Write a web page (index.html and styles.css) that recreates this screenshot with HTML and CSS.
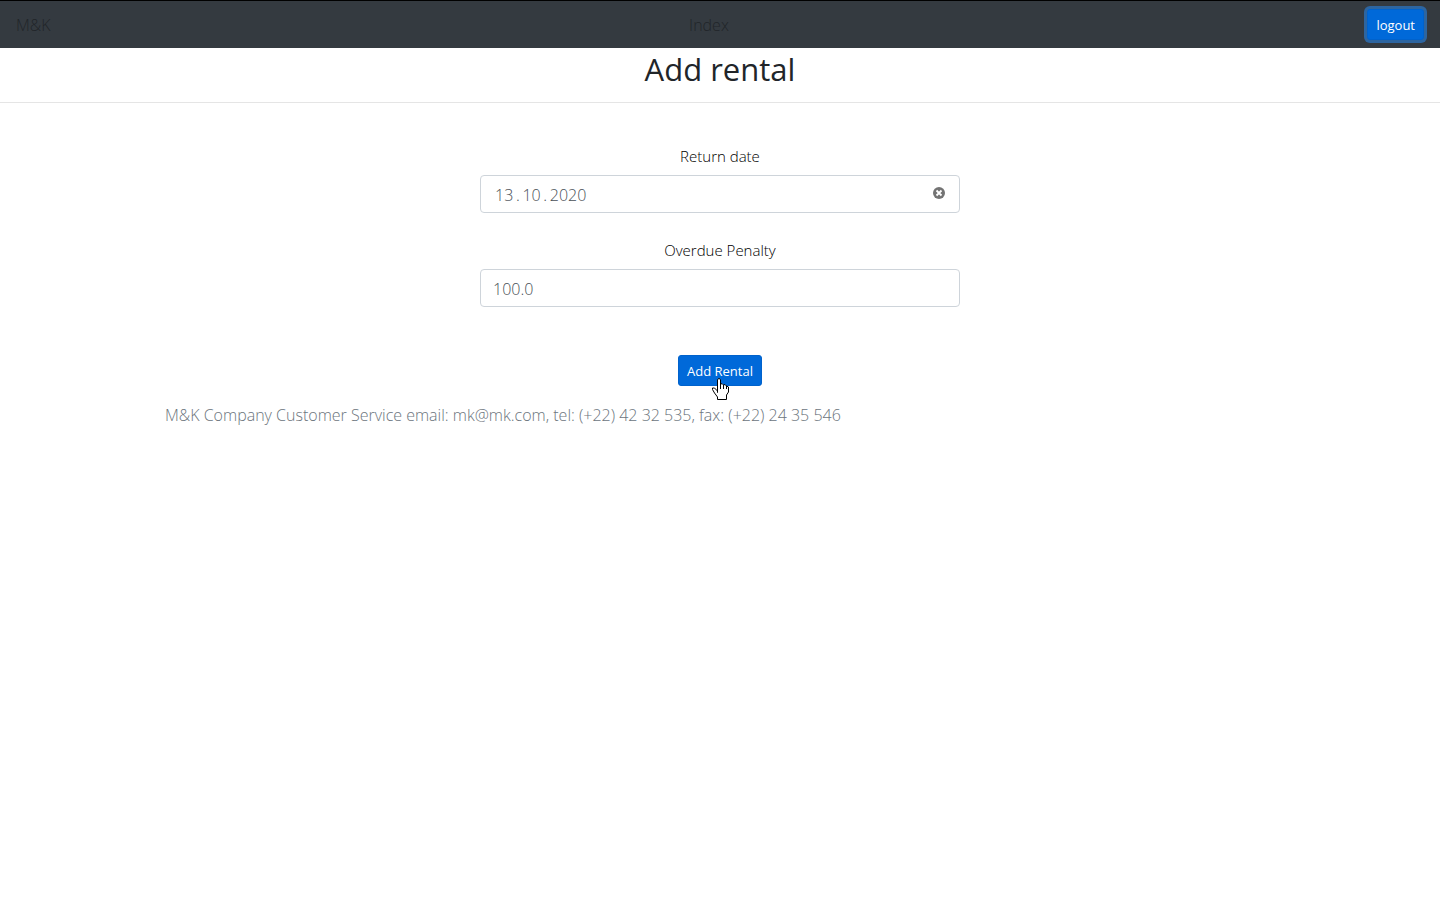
FILE: index.html
```html
<!DOCTYPE html>
<html lang="en">
<head>
<meta charset="utf-8">
<title>Add rental</title>
<link rel="stylesheet" href="styles.css">
</head>
<body>
<nav class="navbar">
  <a class="nav-link" href="#">M&amp;K</a>
  <a class="nav-link" href="#">Index</a>
  <button class="btn btn-focus" type="button">logout</button>
</nav>
<main>
  <h1 class="title">Add rental</h1>
  <form class="form">
    <div class="field">
      <label for="date">Return date</label>
      <div class="date-box">
        <input class="date-input" id="date" type="text" value="13&#8201;.&#8201;10&#8201;.&#8201;2020">
        <button class="clear" type="button" aria-label="Clear date">
          <svg width="12" height="12" viewBox="0 0 12 12"><circle cx="6" cy="6" r="6" fill="#737373"/><path d="M3.5 3.5l5 5M8.5 3.5l-5 5" stroke="#fff" stroke-width="1.8"/></svg>
        </button>
      </div>
    </div>
    <div class="field">
      <label for="penalty">Overdue Penalty</label>
      <input class="text-input" id="penalty" type="text" value="100.0">
    </div>
    <div class="submit">
      <button class="btn" type="button">Add Rental</button>
      <svg class="pointer" width="17" height="22" viewBox="0 0 17 22" aria-hidden="true"><path d="M5.5 14.5V2L6.5 .5H7.5L8.5 2V6.5L10 5.5 11.5 7 13 6.500 14.500 8 16.500 9V14L14.500 17V21.500H5.500V19L2.500 15 .5 11.500V10H2.500L5.500 13Z" fill="#fff" stroke="#000"/><path d="M8.500 6V11M11.500 7V11M14.500 8V11" stroke="#000" fill="none"/></svg>
    </div>
  </form>
</main>
<footer class="footer">M&amp;K Company Customer Service email: mk@mk.com, tel: (+22) 42 32 535, fax: (+22) 24 35 546</footer>
</body>
</html>
```
FILE: styles.css
```css
* {
  box-sizing: border-box;
}

body {
  margin: 0;
  background: #fff;
  color: #212529;
  font-family: "Open Sans", "Noto Sans", sans-serif;
  font-size: 16px;
  font-weight: 300;
  line-height: 24px;
}

.navbar {
  display: flex;
  align-items: center;
  justify-content: space-between;
  padding: 8px 16px;
  border-top: 1px solid #000;
  background: #343a40;
}

.nav-link {
  color: #212529;
  text-decoration: none;
}

.btn {
  padding: 5px 8px 3px;
  border: 1px solid #0062cc;
  border-radius: 3px;
  background: #0069d9;
  color: #fff;
  font-family: inherit;
  font-size: 13px;
  font-weight: 400;
  line-height: 21px;
}

.btn-focus {
  box-shadow: 0 0 0 3px rgba(38, 143, 255, 0.5);
}

.title {
  margin: 0;
  padding: 2px 0 14px;
  border-bottom: 1px solid #e5e5e5;
  font-size: 31px;
  font-weight: 400;
  line-height: 38px;
  text-align: center;
}

.form {
  width: 33.3333%;
  margin: 0 auto;
  padding-top: 41px;
}

.field {
  display: flex;
  flex-direction: column;
  gap: 7px;
  margin-bottom: 25px;
}

.field label {
  color: #000;
  font-size: 15px;
  text-align: center;
}

.text-input,
.date-box {
  width: 100%;
  height: 38px;
  border: 1px solid #ced4da;
  border-radius: 4px;
  background: #fff;
}

.text-input,
.date-input {
  color: #495057;
  font: inherit;
}

.text-input {
  padding: 6px 12px 4px;
}

.date-box {
  display: flex;
  align-items: center;
  padding: 0 14px;
}

.date-input {
  flex: 1;
  min-width: 0;
  padding: 2px 0 0;
  border: 0;
  background: none;
}

.clear {
  display: flex;
  padding: 0 0 2px;
  border: 0;
  background: none;
}

.submit {
  position: relative;
  display: flex;
  justify-content: center;
  padding-top: 23px;
}

.pointer {
  position: absolute;
  top: 46px;
  left: 50%;
  margin-left: -8px;
}

.footer {
  max-width: 1140px;
  margin: 0 auto;
  padding: 17px 15px;
  color: #6c757d;
}
```
